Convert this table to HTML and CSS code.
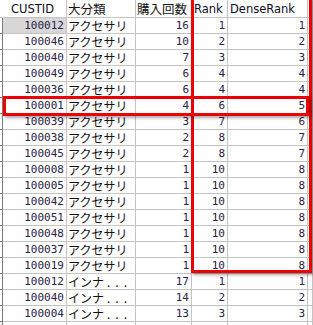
FILE: index.html
```html
<!DOCTYPE html>
<html>
<head>
<meta charset="utf-8">
<link rel="stylesheet" href="styles.css">
</head>
<body>
<div class="sheet">
  <div class="grid">
    <div class="c rh hd"></div><div class="c hd h-cust">CUSTID</div><div class="c hd jp">大分類</div><div class="c hd jp">購入回数</div><div class="c hd">Rank</div><div class="c hd">DenseRank</div><div class="c hd"></div>

    <div class="c rh"></div><div class="c n sel">100012</div><div class="c jp">アクセサリ</div><div class="c n">16</div><div class="c n">1</div><div class="c n">1</div><div class="c"></div>
    <div class="c rh"></div><div class="c n">100046</div><div class="c jp">アクセサリ</div><div class="c n">10</div><div class="c n">2</div><div class="c n">2</div><div class="c"></div>
    <div class="c rh"></div><div class="c n">100040</div><div class="c jp">アクセサリ</div><div class="c n">7</div><div class="c n">3</div><div class="c n">3</div><div class="c"></div>
    <div class="c rh"></div><div class="c n">100049</div><div class="c jp">アクセサリ</div><div class="c n">6</div><div class="c n">4</div><div class="c n">4</div><div class="c"></div>
    <div class="c rh"></div><div class="c n">100036</div><div class="c jp">アクセサリ</div><div class="c n">6</div><div class="c n">4</div><div class="c n">4</div><div class="c"></div>
    <div class="c rh"></div><div class="c n">100001</div><div class="c jp">アクセサリ</div><div class="c n">4</div><div class="c n">6</div><div class="c n">5</div><div class="c"></div>
    <div class="c rh"></div><div class="c n">100039</div><div class="c jp">アクセサリ</div><div class="c n">3</div><div class="c n">7</div><div class="c n">6</div><div class="c"></div>
    <div class="c rh"></div><div class="c n">100038</div><div class="c jp">アクセサリ</div><div class="c n">2</div><div class="c n">8</div><div class="c n">7</div><div class="c"></div>
    <div class="c rh"></div><div class="c n">100045</div><div class="c jp">アクセサリ</div><div class="c n">2</div><div class="c n">8</div><div class="c n">7</div><div class="c"></div>
    <div class="c rh"></div><div class="c n">100008</div><div class="c jp">アクセサリ</div><div class="c n">1</div><div class="c n">10</div><div class="c n">8</div><div class="c"></div>
    <div class="c rh"></div><div class="c n">100005</div><div class="c jp">アクセサリ</div><div class="c n">1</div><div class="c n">10</div><div class="c n">8</div><div class="c"></div>
    <div class="c rh"></div><div class="c n">100042</div><div class="c jp">アクセサリ</div><div class="c n">1</div><div class="c n">10</div><div class="c n">8</div><div class="c"></div>
    <div class="c rh"></div><div class="c n">100051</div><div class="c jp">アクセサリ</div><div class="c n">1</div><div class="c n">10</div><div class="c n">8</div><div class="c"></div>
    <div class="c rh"></div><div class="c n">100048</div><div class="c jp">アクセサリ</div><div class="c n">1</div><div class="c n">10</div><div class="c n">8</div><div class="c"></div>
    <div class="c rh"></div><div class="c n">100037</div><div class="c jp">アクセサリ</div><div class="c n">1</div><div class="c n">10</div><div class="c n">8</div><div class="c"></div>
    <div class="c rh"></div><div class="c n">100019</div><div class="c jp">アクセサリ</div><div class="c n">1</div><div class="c n">10</div><div class="c n">8</div><div class="c"></div>
    <div class="c rh"></div><div class="c n">100012</div><div class="c jp">インナ<span class="dots">...</span></div><div class="c n">17</div><div class="c n">1</div><div class="c n">1</div><div class="c"></div>
    <div class="c rh"></div><div class="c n">100040</div><div class="c jp">インナ<span class="dots">...</span></div><div class="c n">14</div><div class="c n">2</div><div class="c n">2</div><div class="c"></div>
    <div class="c rh"></div><div class="c n">100004</div><div class="c jp">インナ<span class="dots">...</span></div><div class="c n">13</div><div class="c n">3</div><div class="c n">3</div><div class="c"></div>
    <div class="c rh"></div><div class="c n"></div><div class="c jp"></div><div class="c n"></div><div class="c n"></div><div class="c n"></div><div class="c"></div>
  </div>
  <div class="mark mark-cols"></div>
  <div class="mark mark-row"></div>
</div>
</body>
</html>
```
FILE: styles.css
```css
html, body {
  margin: 0;
  padding: 0;
  background: #ffffff;
  overflow: hidden;
}
.sheet {
  position: relative;
  width: 313px;
  height: 325px;
  overflow: hidden;
}
.grid {
  display: grid;
  grid-template-columns: 3px 64px 69px 56px 36px 80px 1fr;
  grid-template-rows: 18px;
  grid-auto-rows: 16px;
  font-family: "DejaVu Sans", sans-serif;
  font-size: 11.5px;
  color: #111111;
}
.c {
  box-sizing: border-box;
  border-right: 1px solid #c3c3c3;
  border-bottom: 1px solid #c3c3c3;
  padding: 0 2px;
  line-height: 15px;
  white-space: nowrap;
  overflow: hidden;
}
.hd {
  line-height: 18px;
  color: #0c0c1c;
}
.hd.rh {
  border-right-color: transparent;
  border-bottom-color: #c3c3c3;
}
.h-cust {
  padding-left: 8px;
}
.hd.jp {
  font-family: "Noto Sans CJK JP", sans-serif;
  font-size: 12.5px;
  line-height: 17px;
}
.rh {
  padding: 0;
  border-right: 1px solid #7a7a7a;
  border-bottom: 1px solid #7a7a7a;
}
.n {
  font-family: "DejaVu Sans Mono", monospace;
  font-size: 11px;
  text-align: right;
  color: #2a2244;
  padding-right: 2px;
}
.jp {
  font-family: "Noto Sans CJK JP", sans-serif;
  font-size: 12px;
  line-height: 15px;
  padding-left: 1px;
  color: #111111;
}
.dots {
  letter-spacing: 5px;
  margin-left: 3px;
}
.sel {
  background: #d7d7d7;
}
.mark {
  position: absolute;
  box-sizing: border-box;
  border: 3px solid #ee0000;
  box-shadow: 2px 2px 3px rgba(0, 0, 0, 0.35);
}
.mark-cols {
  left: 191px;
  top: -3px;
  width: 121px;
  height: 276px;
}
.mark-row {
  left: 3px;
  top: 96px;
  width: 306px;
  height: 20px;
}
```
